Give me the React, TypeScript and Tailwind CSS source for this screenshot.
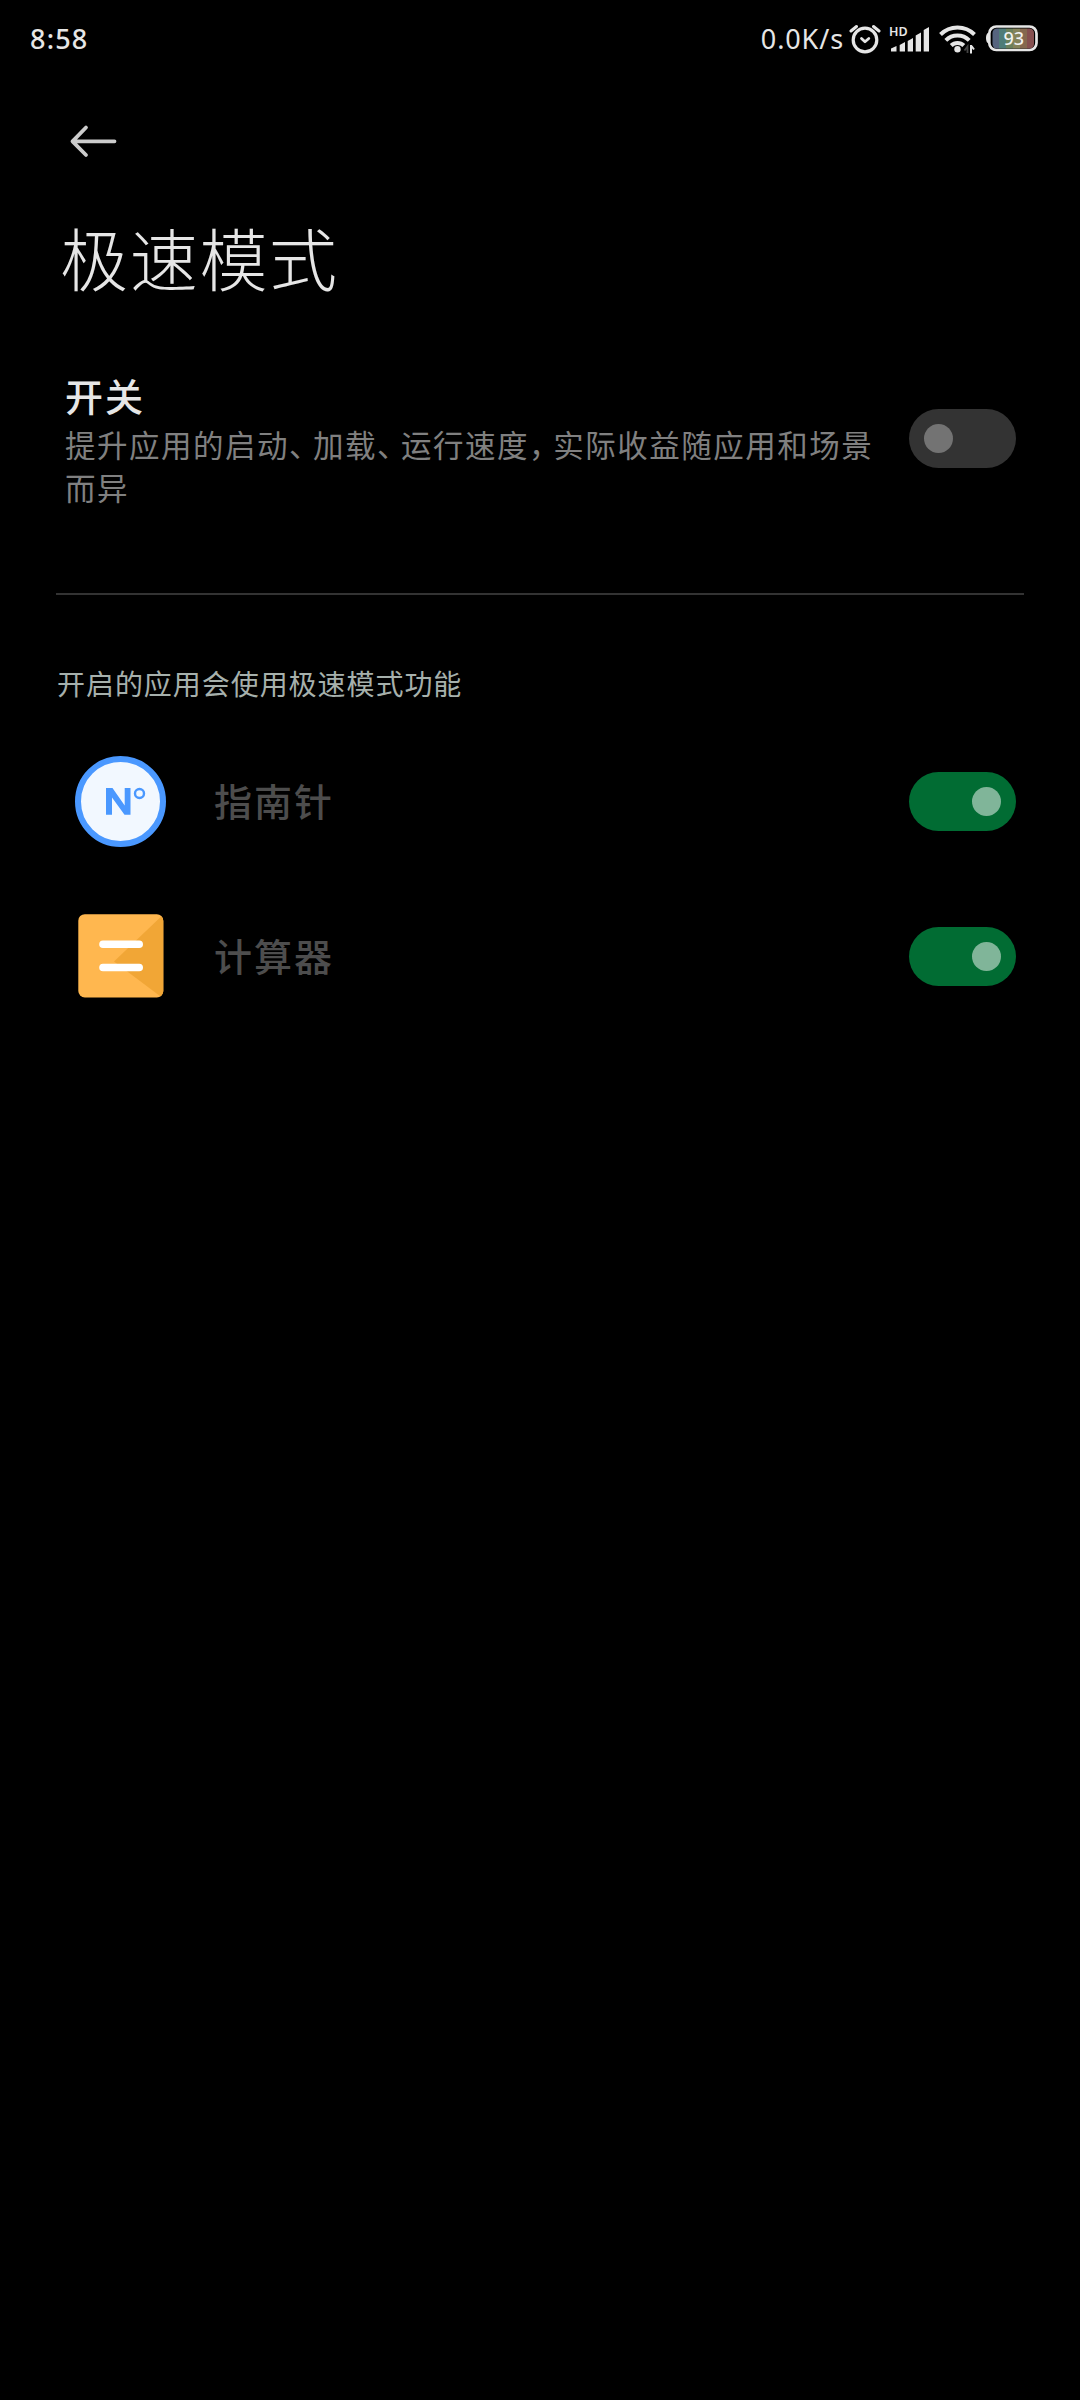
import { useState } from 'react';

const apps = [
  { id: 'compass', name: '指南针', Icon: CompassIcon },
  { id: 'calculator', name: '计算器', Icon: CalculatorIcon },
];

function AlarmIcon() {
  return (
    <svg className="w-[32px] h-[32px]" viewBox="0 0 32 32" fill="none" stroke="#e6e6e6" strokeLinecap="round">
      <circle cx="16" cy="17" r="11.8" strokeWidth="3.2" />
      <path d="M2 8 L7.5 3.5 M30 8 L24.5 3.5" strokeWidth="3" />
      <path d="M12.5 15.5 L16 18.7 L19.8 15.5" strokeWidth="2.8" strokeLinejoin="round" />
    </svg>
  );
}

function SignalIcon() {
  return (
    <svg className="w-[42px] h-[32px] overflow-visible" viewBox="0 0 42 32" fill="#e6e6e6">
      <text x="1" y="12.5" fontSize="12.5" fontWeight="600" fontFamily="Noto Sans, sans-serif">HD</text>
      <path d="M3 25.5 L8.5 23 V28.5 H3Z M11.7 22 L17 19 V28.5 H11.7Z M19.7 18 L25 15 V28.5 H19.7Z M27.7 12.5 L33 9.5 V28.5 H27.7Z M35.7 7 L41 4 V28.5 H35.7Z" />
    </svg>
  );
}

function WifiIcon() {
  return (
    <svg className="w-[38px] h-[32px]" viewBox="0 0 38 32" fill="none" stroke="#e6e6e6" strokeWidth="4">
      <path d="M1.5 11.5 A24 24 0 0 1 35.5 11.5" />
      <path d="M6.8 17.3 A16.5 16.5 0 0 1 30.2 17.3" />
      <path d="M12.2 22.5 A9 9 0 0 1 24.8 22.5" />
      <circle cx="18.5" cy="26.3" r="3.2" fill="#e6e6e6" stroke="none" />
      <path d="M28.5 30 V23.5 L25.5 27.5" stroke="#444444" strokeWidth="1.8" />
      <path d="M32 22 V30.5 M32.5 23 L35 26.5" strokeWidth="2" />
    </svg>
  );
}

function BatteryIcon() {
  return (
    <svg className="w-[54px] h-[32px]" viewBox="0 0 54 32">
      <path d="M4 9.5 Q1 10 1 15 Q1 20 4 20.5Z" fill="#e6e6e6" />
      <rect x="4.3" y="3.5" width="47.2" height="23.5" rx="7" fill="#000000" stroke="#e6e6e6" strokeWidth="2.7" />
      <clipPath id="level">
        <rect x="7.5" y="5.5" width="41.5" height="20" rx="4.5" />
      </clipPath>
      <g clipPath="url(#level)">
        <rect x="7" y="5" width="7" height="21" fill="#56647e" />
        <rect x="14" y="5" width="7" height="21" fill="#4f7c78" />
        <rect x="21" y="5" width="7" height="21" fill="#6b805c" />
        <rect x="28" y="5" width="7" height="21" fill="#85835a" />
        <rect x="35" y="5" width="7" height="21" fill="#85684f" />
        <rect x="42" y="5" width="7" height="21" fill="#854f4f" />
      </g>
      <text x="28.8" y="21.8" textAnchor="middle" fontSize="18" fontWeight="500" fontFamily="Noto Sans, sans-serif" fill="#f2f2f2">93</text>
    </svg>
  );
}

function CompassIcon() {
  return (
    <svg className="w-[92px] h-[92px]" viewBox="0 0 92 92">
      <circle cx="45.5" cy="45.5" r="42.5" fill="#f2f8ff" stroke="#4a98ff" strokeWidth="6" />
      <path d="M31 58.8 V32 H37.5 L49.7 49.5 V32 H55.5 V58.8 H49.5 L37 41.5 V58.8Z" fill="#4a98ff" />
      <circle cx="64.5" cy="37.5" r="4.5" fill="none" stroke="#4a98ff" strokeWidth="2.4" />
    </svg>
  );
}

function CalculatorIcon() {
  return (
    <svg className="w-[92px] h-[92px]" viewBox="0 0 92 92">
      <rect x="3.3" y="3.2" width="85" height="83.3" rx="6.5" fill="#ffb74f" />
      <path d="M86.2 5.5 Q88.3 7 88.3 9.8 V80 Q88.3 83 85.6 85.5 L39 50.5Z" fill="#f1a636" />
      <path d="M28 33.2 H64.2 M28 56.5 H64.2" stroke="#ffffff" strokeWidth="7.6" strokeLinecap="round" />
    </svg>
  );
}

function Switch({ checked, onChange }: { checked: boolean; onChange: () => void }) {
  return (
    <button
      role="switch"
      aria-checked={checked}
      onClick={onChange}
      className={`flex items-center shrink-0 w-[107px] h-[59px] px-[15px] rounded-full ${
        checked ? 'justify-end bg-[#016c33]' : 'justify-start bg-[#333333]'
      }`}
    >
      <span className={`w-[29px] h-[29px] rounded-full ${checked ? 'bg-[#80b599]' : 'bg-[#737373]'}`} />
    </button>
  );
}

function StatusBar() {
  return (
    <div className="flex items-center h-[78px] pl-[30px] pr-[41px] text-[#e6e6e6]">
      <span className="pb-[2px] text-[27px] leading-none font-medium tracking-[1.2px]">8:58</span>
      <div className="flex items-center ml-auto">
        <span className="pb-[2px] text-[27px] leading-none tracking-[0.9px]">0.0K/s</span>
        <div className="flex items-center ml-[5px]">
          <AlarmIcon />
          <div className="ml-[7px]"><SignalIcon /></div>
          <div className="ml-[9px]"><WifiIcon /></div>
          <div className="ml-[8px]"><BatteryIcon /></div>
        </div>
      </div>
    </div>
  );
}

// Punctuation is set narrower than the surrounding full-width characters
function Summary({ text }: { text: string }) {
  return (
    <p className="text-[30.5px] leading-[42.5px] tracking-[1.5px] text-[#808080]">
      {text.split(/([、，])/).map((part, i) =>
        part === '、' || part === '，' ? (
          <span key={i} className="mr-[7.3px] [font-feature-settings:'halt']">{part}</span>
        ) : (
          part
        )
      )}
    </p>
  );
}

export default function App() {
  const [enabled, setEnabled] = useState(false);
  const [appState, setAppState] = useState<Record<string, boolean>>({
    compass: true,
    calculator: true,
  });

  const toggleApp = (id: string) => {
    setAppState(prev => ({ ...prev, [id]: !prev[id] }));
  };

  return (
    <div
      lang="zh-CN"
      className="w-[1080px] h-[2400px] bg-black overflow-hidden font-['Noto_Sans','Noto_Sans_CJK_SC',sans-serif]"
    >
      <StatusBar />

      <header>
        <button className="block mt-[45px] ml-[69px]" aria-label="返回">
          <svg className="w-[50px] h-[36px]" viewBox="0 0 50 36" fill="none" stroke="#cccccc" strokeWidth="3.8" strokeLinecap="round" strokeLinejoin="round">
            <path d="M45.5 18.3 H3.5 M17 4.5 L3.5 18.3 L17 32" />
          </svg>
        </button>
        <h1 className="mt-[51px] ml-[60px] h-[100px] text-[68px] leading-[100px] font-light tracking-[1.7px] text-[#e6e6e6]">
          极速模式
        </h1>
      </header>

      <section className="flex items-start ml-[65px] mr-[64px] mt-[62px] h-[221px]">
        <div className="w-[820px]">
          <h2 className="mb-[4px] text-[38px] leading-[48px] font-medium tracking-[2px] text-[#e6e6e6]">开关</h2>
          <Summary text="提升应用的启动、加载、运行速度，实际收益随应用和场景而异" />
        </div>
        <div className="ml-auto mt-[37px]">
          <Switch checked={enabled} onChange={() => setEnabled(!enabled)} />
        </div>
      </section>

      <div className="ml-[56px] mr-[56px] h-[2px] bg-[#333333]" />

      <p className="mt-[69px] ml-[57px] h-[40px] text-[28px] leading-[40px] tracking-[0.95px] text-[#a6b0ac]">
        开启的应用会使用极速模式功能
      </p>

      <ul className="mt-[20px]">
        {apps.map(({ id, name, Icon }) => (
          <li key={id} className="flex items-center h-[155px] pl-[75px] pr-[64px]">
            <Icon />
            <span className="ml-[47px] pb-[2px] text-[38px] leading-none font-medium tracking-[2px] text-[#4d4d4d]">
              {name}
            </span>
            <div className="ml-auto">
              <Switch checked={appState[id]} onChange={() => toggleApp(id)} />
            </div>
          </li>
        ))}
      </ul>
    </div>
  );
}
